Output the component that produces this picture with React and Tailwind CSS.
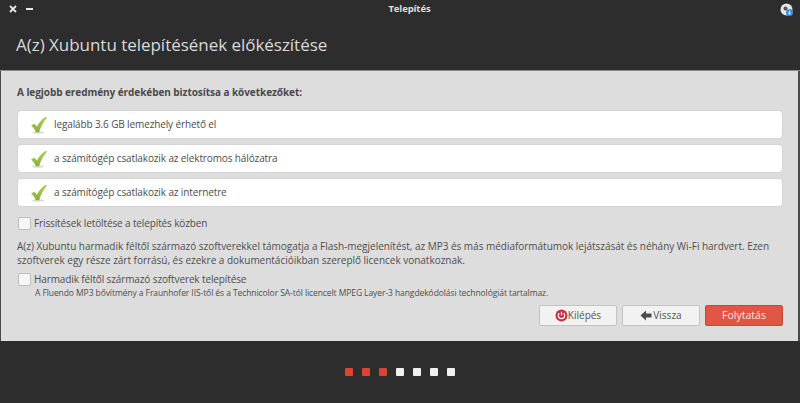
import React from "react";

const font = "font-['Open_Sans','Noto_Sans',sans-serif]";

const Check = () => (
  <svg width="16" height="18" viewBox="0 0 16 18" className="shrink-0">
    <defs>
      <linearGradient id="tick" x1="0" y1="0" x2="0" y2="1">
        <stop offset="0" stopColor="#b4d556" />
        <stop offset="1" stopColor="#86b034" />
      </linearGradient>
    </defs>
    <ellipse cx="7" cy="16.5" rx="6" ry="1.3" fill="#000" opacity="0.14" />
    <path
      d="M0.5 9.5 L3.5 8 L6 11 C8 7 10.5 3.5 15 1 L15.5 2 C12 6 9.5 10.5 8 16 L5 16 C4 13.5 2.5 11.5 0.5 9.5 Z"
      fill="url(#tick)"
      stroke="#86a838"
      strokeWidth="0.4"
    />
  </svg>
);

const Requirement = ({ label }) => (
  <div className="flex h-[29px] items-center rounded-[4px] border border-[#d4d4d4] bg-white pl-[13px]">
    <Check />
    <span className="ml-[7px] text-[10px] tracking-[-0.12px] text-[#4d4d4d]">{label}</span>
  </div>
);

const Box = () => (
  <span className="h-[13px] w-[13px] shrink-0 rounded-[2px] border border-[#bdbdbd] bg-[#f6f6f6]" />
);

const Dot = ({ on }) => (
  <span className={`h-[8px] w-[8px] rounded-[1px] ${on ? "bg-[#dd4533]" : "bg-[#f0f0f0]"}`} />
);

export default function App() {
  return (
    <div className={`flex h-[403px] w-[800px] flex-col overflow-hidden bg-[#2d2d2d] ${font}`}>
      <div className="flex h-[71px] flex-col border-b border-[#8a8a8a]">
        <div className="flex h-[18px] items-center justify-between pl-[9px] pr-[6px]">
          <div className="flex w-[60px] items-center gap-[9px] text-white">
            <svg width="8" height="8" viewBox="0 0 8 8">
              <path d="M1 1 L7 7 M7 1 L1 7" stroke="#e8e8e8" strokeWidth="1.8" />
            </svg>
            <span className="h-[1.5px] w-[7px] bg-[#e8e8e8]" />
          </div>
          <span className="ml-[-30px] text-[9.5px] font-bold tracking-[-0.1px] text-[#dedede]">Telepítés</span>
          <svg width="14" height="14" viewBox="0 0 14 14" className="mt-[1px]">
            <circle cx="6.5" cy="6.5" r="6" fill="#e6e6e6" />
            <circle cx="5.5" cy="5.5" r="2" fill="#555" />
            <circle cx="9.5" cy="9.5" r="3.5" fill="#3b8fd6" />
            <path d="M9.5 7.5 V11 M8 9.8 L9.5 11.3 L11 9.8" stroke="#fff" strokeWidth="0.8" fill="none" />
          </svg>
        </div>
        <h1 className="mt-[14px] pl-[16px] text-[17px] leading-[26px] font-normal tracking-[-0.03px] text-[#d9d9d9]">
          A(z) Xubuntu telepítésének előkészítése
        </h1>
      </div>

      <div className="flex h-[270px] flex-col border-l-[1px] border-r-[2px] border-[#4a4a4a] bg-[#dddddd] pl-[16px] pr-[15px]">
        <p className="mt-[14px] text-[10px] leading-[14px] font-bold tracking-[-0.06px] text-[#4a4a4a]">
          A legjobb eredmény érdekében biztosítsa a következőket:
        </p>
        <div className="mt-[11px] flex flex-col gap-[5px]">
          <Requirement label="legalább 3.6 GB lemezhely érhető el" />
          <Requirement label="a számítógép csatlakozik az elektromos hálózatra" />
          <Requirement label="a számítógép csatlakozik az internetre" />
        </div>
        <label className="mt-[9px] flex items-center gap-[3px] pl-[1px]">
          <Box />
          <span className="text-[10px] leading-[14px] tracking-[-0.12px] text-[#4d4d4d]">Frissítések letöltése a telepítés közben</span>
        </label>
        <p className="mt-[9px] text-[10px] leading-[14px] tracking-[-0.02px] text-[#4d4d4d]">
          A(z) Xubuntu harmadik féltől származó szoftverekkel támogatja a Flash-megjelenítést, az MP3 és más médiaformátumok lejátszását és néhány Wi-Fi hardvert. Ezen szoftverek egy része zárt forrású, és ezekre a dokumentációikban szereplő licencek vonatkoznak.
        </p>
        <label className="mt-[5px] flex items-center gap-[3px] pl-[1px]">
          <Box />
          <span className="text-[10px] leading-[14px] tracking-[-0.12px] text-[#4d4d4d]">Harmadik féltől származó szoftverek telepítése</span>
        </label>
        <p className="mt-[1px] pl-[18px] text-[8.5px] leading-[12px] tracking-[-0.08px] text-[#4d4d4d]">
          A Fluendo MP3 bővítmény a Fraunhofer IIS-től és a Technicolor SA-tól licencelt MPEG Layer-3 hangdekódolási technológiát tartalmaz.
        </p>
        <div className="mt-[6px] flex justify-end gap-[5px]">
          <button className="flex h-[21px] w-[78px] items-center justify-center rounded-[2px] border border-[#c4c4c4] bg-[#f2f2f2] text-[10px] text-[#555]">
            <svg width="13" height="13" viewBox="0 0 13 13">
              <circle cx="6.5" cy="6.5" r="6" fill="#c8304a" />
              <path d="M4.3 4.2 A3.2 3.2 0 1 0 8.7 4.2 M6.5 2.8 V6.2" stroke="#fff" strokeWidth="1.2" fill="none" />
            </svg>
            Kilépés
          </button>
          <button className="flex h-[21px] w-[78px] items-center justify-center gap-[1px] rounded-[2px] border border-[#c4c4c4] bg-[#f2f2f2] text-[10px] text-[#555]">
            <svg width="12" height="11" viewBox="0 0 12 11">
              <path d="M6 0.5 L0.5 5.5 L6 10.5 V7.5 H11.5 V3.5 H6 Z" fill="#4a4a4a" />
            </svg>
            Vissza
          </button>
          <button className="flex h-[21px] w-[78px] items-center justify-center rounded-[2px] border border-[#c9463a] bg-[#e05543] text-[10.5px] text-[#f5e4e0]">
            Folytatás
          </button>
        </div>
      </div>

      <div className="flex flex-1 items-center justify-center gap-[9px]">
        <Dot on />
        <Dot on />
        <Dot on />
        <Dot />
        <Dot />
        <Dot />
        <Dot />
      </div>
    </div>
  );
}
